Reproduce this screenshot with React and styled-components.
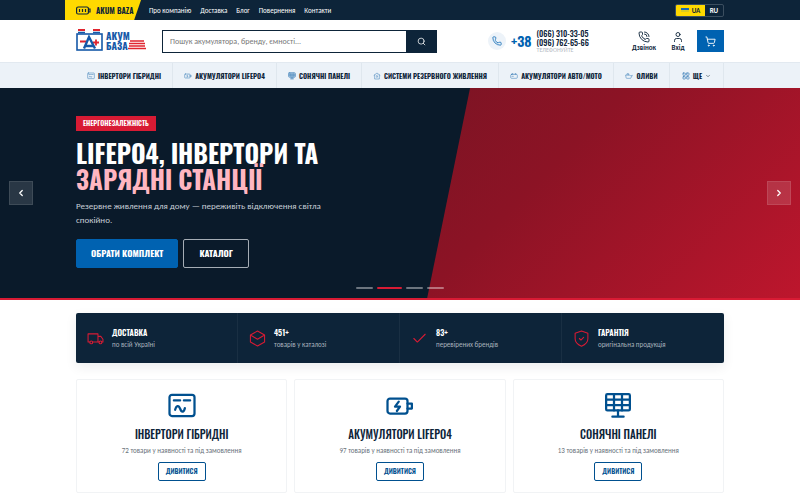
import React, { useState } from 'react';
import styled, { createGlobalStyle } from 'styled-components';
import { Phone, PhoneCall, User, ShoppingCart, Search, ChevronLeft, ChevronRight, ChevronDown, Check, LayoutGrid } from 'lucide-react';

const navy = '#0d2439';
const blue = '#0062b1';
const red = '#d81b34';
const head = `Oswald, "Liberation Sans Narrow", "Roboto Condensed", "Liberation Sans", sans-serif`;
const text = `Carlito, Lato, "Noto Sans", sans-serif`;

const GlobalStyle = createGlobalStyle`
  * { box-sizing: border-box; }
  body {
    margin: 0;
    background: #fff;
    color: ${navy};
    font-family: ${text};
    font-size: 7px;
  }
  h1, h2, h3, p { margin: 0; }
  a { color: inherit; text-decoration: none; }
  button { font: inherit; cursor: pointer; padding: 0; }
  svg { display: block; flex: none; }
`

/* ---------- top bar ---------- */
const TopBar = styled.div`
  display: flex;
  align-items: center;
  height: 20px;
  padding: 0 76px 0 65px;
  background: ${navy};
  color: #fff;
`
const Promo = styled.a`
  display: flex;
  align-items: center;
  gap: 5px;
  width: 76px;
  height: 20px;
  padding-left: 11px;
  background: #ffd900;
  color: ${navy};
  clip-path: polygon(0 0, 100% 0, 91% 100%, 0 100%);
  font: 600 8px/20px ${head};
  white-space: nowrap;
`
const TopLinks = styled.nav`
  display: flex;
  flex: 1;
  gap: 9px;
  padding-left: 8px;
  white-space: nowrap;
`
const Langs = styled.div`
  display: flex;
  height: 13px;
  border: 1px solid #3b4e5f;
  border-radius: 2px;
  overflow: hidden;
`
const Lang = styled.button`
  display: flex;
  align-items: center;
  justify-content: center;
  gap: 3px;
  width: ${props => props.$on ? '29px' : '18px'};
  border: 0;
  background: ${props => props.$on ? '#ffd900' : 'transparent'};
  color: ${props => props.$on ? navy : '#fff'};
  font-weight: bold;
`
const Flag = styled.i`
  width: 8px;
  height: 4px;
  background: linear-gradient(#1769b5 60%, #d9cb22 60%);
`

/* ---------- header ---------- */
const Header = styled.header`
  display: flex;
  align-items: center;
  height: 42px;
  padding: 0 76px;
`
const SearchForm = styled.form`
  display: flex;
  flex: 1;
  height: 23px;
  margin: 0 51px 0 16px;
  border: 1px solid ${navy};
  input {
    flex: 1;
    min-width: 0;
    border: 0;
    padding: 0 7px;
    outline: 0;
    font: 8px ${text};
  }
  input::placeholder { color: #777; opacity: 1; }
  button {
    display: grid;
    place-items: center;
    width: 30px;
    border: 0;
    background: ${navy};
    color: #fff;
  }
`
const Phones = styled.div`
  display: flex;
  align-items: center;
  gap: 5px;
  width: 145px;
`
const Round = styled.span`
  display: grid;
  place-items: center;
  width: 18px;
  height: 18px;
  border-radius: 50%;
  background: #edf3f9;
  color: ${blue};
`
const Code = styled.b`
  color: ${blue};
  font: 600 14px/18px ${head};
`
const Numbers = styled.div`
  display: flex;
  flex-direction: column;
  font: 500 8px/9px ${head};
  white-space: nowrap;
  small {
    color: #b3b9bf;
    font: 6px/6px ${text};
  }
`
const HeadAction = styled.a`
  display: flex;
  flex-direction: column;
  align-items: center;
  gap: 1px;
  width: 22px;
  margin-right: ${props => props.$gap}px;
  line-height: 8px;
  font-weight: bold;
`
const Cart = styled.button`
  display: grid;
  place-items: center;
  width: 27px;
  height: 22px;
  border: 0;
  background: ${blue};
  color: #fff;
`

/* ---------- catalog menu ---------- */
const Menu = styled.nav`
  display: grid;
  grid-template-columns: 97fr 104fr 85fr 137fr 115fr 56fr 54fr;
  height: 26px;
  padding: 0 76px;
  background: #ecf2f8;
  border-top: 1px solid #e2e9f0;
`
const MenuItem = styled.a`
  display: flex;
  align-items: center;
  justify-content: center;
  gap: 3px;
  border-right: 1px solid #dfe7ee;
  font: bold 7px/10px ${head};
  white-space: nowrap;
  svg { color: #3379b5; }
  svg:last-child:not(:first-child) { color: ${navy}; }
`

/* ---------- hero ---------- */
const Hero = styled.section`
  position: relative;
  display: flex;
  align-items: center;
  justify-content: space-between;
  height: 212px;
  padding: 0 9px;
  border-bottom: 2px solid ${red};
  background: #0a1a2a;
`
const Slope = styled.div`
  position: absolute;
  inset: 0 0 0 53.4%;
  background: linear-gradient(135deg, #7c1424 0%, #8c1325 35%, #bd162d 100%);
  clip-path: polygon(11.5% 0, 100% 0, 100% 100%, 0 100%);
`
const Arrow = styled.button`
  position: relative;
  display: grid;
  place-items: center;
  width: 24px;
  height: 24px;
  border: 1px solid rgba(255, 255, 255, .1);
  background: rgba(255, 255, 255, .13);
  color: #fff;
`
const Slide = styled.div`
  position: relative;
  flex: 1;
  align-self: flex-start;
  padding: 28px 43px 0;
`
const Tag = styled.div`
  width: fit-content;
  padding: 0 7px;
  background: ${red};
  color: #fff;
  font: 600 7px/15px ${head};
`
const Title = styled.h1`
  margin-top: 9px;
  color: #fff;
  font: bold 25px/26px ${head};
  white-space: nowrap;
  span { display: block; color: #ffb6c1; }
`
const Lead = styled.p`
  width: 264px;
  margin-top: 7px;
  color: #c7ced6;
  font-size: 9px;
  line-height: 14px;
`
const Actions = styled.div`
  display: flex;
  gap: 5px;
  margin-top: 12px;
`
const HeroButton = styled.a`
  padding: 0 ${props => props.$main ? 14 : 15}px;
  border: 1px solid ${props => props.$main ? blue : '#a5adb5'};
  border-radius: 2px;
  background: ${props => props.$main ? blue : 'transparent'};
  color: #fff;
  font: bold 9px/27px ${head};
`
const Dots = styled.div`
  position: absolute;
  left: 0;
  right: 0;
  bottom: 9px;
  display: flex;
  justify-content: center;
  gap: 4px;
`
const Dot = styled.button`
  width: ${props => props.$on ? 25 : 17}px;
  height: 2px;
  border: 0;
  border-radius: 1px;
  background: ${props => props.$on ? red : 'rgba(255, 255, 255, .4)'};
`

/* ---------- features ---------- */
const Features = styled.section`
  display: grid;
  grid-template-columns: repeat(4, 1fr);
  height: 50px;
  margin: 13px 76px 0;
  border-radius: 2px;
  background: ${navy};
  box-shadow: 0 4px 12px rgba(13, 36, 57, .08);
`
const Feature = styled.div`
  display: flex;
  align-items: center;
  gap: 8px;
  padding-left: 11px;
  border-right: 1px solid #192f43;
  color: #a9b3bd;
  line-height: 12px;
  white-space: nowrap;
  &:last-child { border: 0; }
  svg { color: ${red}; }
  h3 { color: #fff; font: 600 8px/13px ${head}; }
`

/* ---------- categories ---------- */
const Cards = styled.section`
  display: grid;
  grid-template-columns: repeat(3, 1fr);
  gap: 7px;
  padding: 16px 76px 7px;
`
const Card = styled.article`
  display: flex;
  flex-direction: column;
  align-items: center;
  padding: 11px 8px;
  border: 1px solid #f1f3f5;
  border-radius: 2px;
  svg { color: #00508f; }
  h2 { margin-top: 4px; font: 500 11px/18px ${head}; }
  p { margin: 2px 0 6px; color: #68717a; line-height: 11px; }
  a {
    padding: 0 7px;
    border: 1px solid #00508f;
    border-radius: 2px;
    color: #00508f;
    font: 600 7px/17px ${head};
  }
`

const Icon = ({ size = 16, sw = 1.5, children }) => (
  <svg width={size} height={size} viewBox="0 0 24 24" fill="none" stroke="currentColor"
       strokeWidth={sw} strokeLinecap="round" strokeLinejoin="round">{children}</svg>
)

const Inverter = (props) => (
  <Icon {...props}>
    <rect x="2" y="3" width="20" height="17" rx="2" />
    <path d="M5.500 7.500h5M13.500 7.500h5M6.500 15c1-3.500 2.800-4 4-.8s3 3 3.800-.5" />
  </Icon>
)
const Battery = (props) => (
  <Icon {...props}>
    <rect x="2" y="6" width="16" height="12" rx="2" />
    <path d="M18 10h3.500v4h-3.500M11 8.500l-3 4h4l-2.500 3.500" />
  </Icon>
)
const Solar = (props) => (
  <Icon {...props}>
    <rect x="2.500" y="2.500" width="19" height="13" rx="1" />
    <path d="M2.500 6.800h19M2.500 11.200h19M8.800 2.500v13M15.200 2.500v13M12 15.500v5M7.500 20.500h9" />
  </Icon>
)
const HomePower = (props) => (
  <Icon {...props}>
    <path d="M3 10l9-7 9 7M5 9v12h14V9M12.500 9l-2.500 4h4l-2.500 4" />
  </Icon>
)
const CarBattery = (props) => (
  <Icon {...props}>
    <rect x="2" y="7" width="20" height="12" rx="3" />
    <path d="M6 7V5h3v2M15 7V5h3v2M6 13h4" />
  </Icon>
)
const OilCan = (props) => (
  <Icon {...props}>
    <path d="M3 9h11l3 3 5-2-5 9H5a2 2 0 0 1-2-2zM6 9V5h5v4" />
  </Icon>
)
const Truck = (props) => (
  <Icon {...props}>
    <path d="M4 17H1.500V5.500h14V17H8M15.500 9h4l3 4v4H21M17 17h-1.500" />
    <circle cx="6" cy="17.500" r="2" />
    <circle cx="19" cy="17.500" r="2" />
  </Icon>
)
const Box = (props) => (
  <Icon {...props}>
    <path d="M12 1.500l10 5.500v10l-10 5.500L2 17V7zM2 7l10 6 10-6" />
  </Icon>
)
const Shield = (props) => (
  <Icon {...props}>
    <path d="M12 1.500l9 3v8c0 5-4 8.500-9 10.500-5-2-9-5.500-9-10.500v-8zM9 12l2.200 2.200 3.800-3.800" />
  </Icon>
)

const Logo = () => (
  <svg width="70" height="30" viewBox="0 -3 70 30" role="img" aria-label="АКУМ БАЗА">
    <path d="M2 1h7M17 1h7" stroke="#e0252f" strokeWidth="2" />
    <rect x="1" y="5" width="25" height="16" fill="none" stroke="#1659a8" strokeWidth="1.600" />
    <path d="M2 3.500h7M17 3.500h7" stroke="#1659a8" strokeWidth="1.500" />
    <path d="M4 12.500h6M17 13.500h6M20 10.500v6" stroke="#e0252f" strokeWidth="1.800" />
    <path d="M8 19.500L13 8l6 11.500M10 17h7" fill="none" stroke="#1659a8" strokeWidth="2.400" />
    <path d="M54 12h14M53 14.500h16M53 17h16M52 19.500h18" stroke="#e0252f" strokeWidth="1.300" />
    <g fill="#1659a8" fontFamily="Oswald, 'Liberation Sans Narrow', sans-serif" fontWeight="bold" fontSize="10">
      <text x="30" y="11">АКУМ</text>
      <text x="30" y="21">БАЗА</text>
    </g>
  </svg>
)

const menu = [
  ['Інвертори гібридні', <Inverter size={8} />],
  ['Акумулятори LiFePO4', <Battery size={8} />],
  ['Сонячні панелі', <Solar size={8} sw={2} />],
  ['Системи резервного живлення', <HomePower size={8} />],
  ['Акумулятори авто/мото', <CarBattery size={8} />],
  ['Оливи', <OilCan size={8} />],
  ['Ще', <LayoutGrid size={8} />],
]

const features = [
  ['ДОСТАВКА', 'по всій Україні', Truck],
  ['451+', 'товарів у каталозі', Box],
  ['83+', 'перевірених брендів', Check],
  ['ГАРАНТІЯ', 'оригінальна продукція', Shield],
]

const cards = [
  ['ІНВЕРТОРИ ГІБРИДНІ', '72 товари у наявності та під замовлення', Inverter],
  ['АКУМУЛЯТОРИ LIFEPO4', '97 товарів у наявності та під замовлення', Battery],
  ['СОНЯЧНІ ПАНЕЛІ', '13 товарів у наявності та під замовлення', Solar],
]

const App = () => {
  const [lang, setLang] = useState('UA');
  const [slide, setSlide] = useState(1);
  const move = (step) => setSlide((slide + step + 4) % 4)

  return (
    <>
      <GlobalStyle />
      <TopBar>
        <Promo href="#">
          <svg width="15" height="9" viewBox="0 0 15 9" fill="none" stroke={navy}>
            <rect x=".6" y="1" width="11.800" height="7" rx="1.500" strokeWidth="1.200" />
            <path d="M12.500 3h1.500v3h-1.500M3.500 3v3M6.500 3v3M9.500 3v3" strokeWidth="1.200" />
          </svg>
          AKUM BAZA
        </Promo>
        <TopLinks>
          {['Про компанію', 'Доставка', 'Блог', 'Повернення', 'Контакти'].map(t => <a key={t} href="#">{t}</a>)}
        </TopLinks>
        <Langs>
          {['UA', 'RU'].map(l => (
            <Lang key={l} $on={lang === l} onClick={() => setLang(l)}>{l === 'UA' && <Flag />}{l}</Lang>
          ))}
        </Langs>
      </TopBar>

      <Header>
        <a href="#"><Logo /></a>
        <SearchForm onSubmit={e => e.preventDefault()}>
          <input type="search" aria-label="Пошук" placeholder="Пошук акумулятора, бренду, ємності..." />
          <button aria-label="Шукати"><Search size={9} /></button>
        </SearchForm>
        <Phones>
          <Round><Phone size={10} strokeWidth={1.8} /></Round>
          <Code>+38</Code>
          <Numbers>
            <a href="tel:+380663103305">(066) 310-33-05</a>
            <a href="tel:+380967626566">(096) 762-65-66</a>
            <small>ТЕЛЕФОНУЙТЕ</small>
          </Numbers>
        </Phones>
        <HeadAction href="#" $gap={12}><PhoneCall size={12} strokeWidth={1.8} />Дзвінок</HeadAction>
        <HeadAction href="#" $gap={8}><User size={12} strokeWidth={1.8} />Вхід</HeadAction>
        <Cart aria-label="Кошик"><ShoppingCart size={11} /></Cart>
      </Header>

      <Menu>
        {menu.map(([title, icon]) => (
          <MenuItem key={title} href="#">
            {icon}<span>{title.toUpperCase()}</span>
            {title === 'Ще' && <ChevronDown size={6} />}
          </MenuItem>
        ))}
      </Menu>

      <Hero>
        <Slope />
        <Arrow aria-label="Назад" onClick={() => move(-1)}><ChevronLeft size={10} strokeWidth={3} /></Arrow>
        <Slide>
          <Tag>ЕНЕРГОНЕЗАЛЕЖНІСТЬ</Tag>
          <Title>LIFEPO4, ІНВЕРТОРИ ТА <span>ЗАРЯДНІ СТАНЦІЇ</span></Title>
          <Lead>Резервне живлення для дому — переживіть відключення світла спокійно.</Lead>
          <Actions>
            <HeroButton href="#" $main>ОБРАТИ КОМПЛЕКТ</HeroButton>
            <HeroButton href="#">КАТАЛОГ</HeroButton>
          </Actions>
        </Slide>
        <Arrow aria-label="Вперед" onClick={() => move(1)}><ChevronRight size={10} strokeWidth={3} /></Arrow>
        <Dots>
          {[0, 1, 2, 3].map(i => <Dot key={i} $on={slide === i} aria-label={`Слайд ${i + 1}`} onClick={() => setSlide(i)} />)}
        </Dots>
      </Hero>

      <Features>
        {features.map(([title, note, Pic]) => (
          <Feature key={title}>
            <Pic size={17} strokeWidth={1.5} />
            <div><h3>{title}</h3><p>{note}</p></div>
          </Feature>
        ))}
      </Features>

      <Cards>
        {cards.map(([title, note, Pic]) => (
          <Card key={title}>
            <Pic size={30} sw={1.8} />
            <h2>{title}</h2>
            <p>{note}</p>
            <a href="#">ДИВИТИСЯ</a>
          </Card>
        ))}
      </Cards>
    </>
  )
}

export default App
